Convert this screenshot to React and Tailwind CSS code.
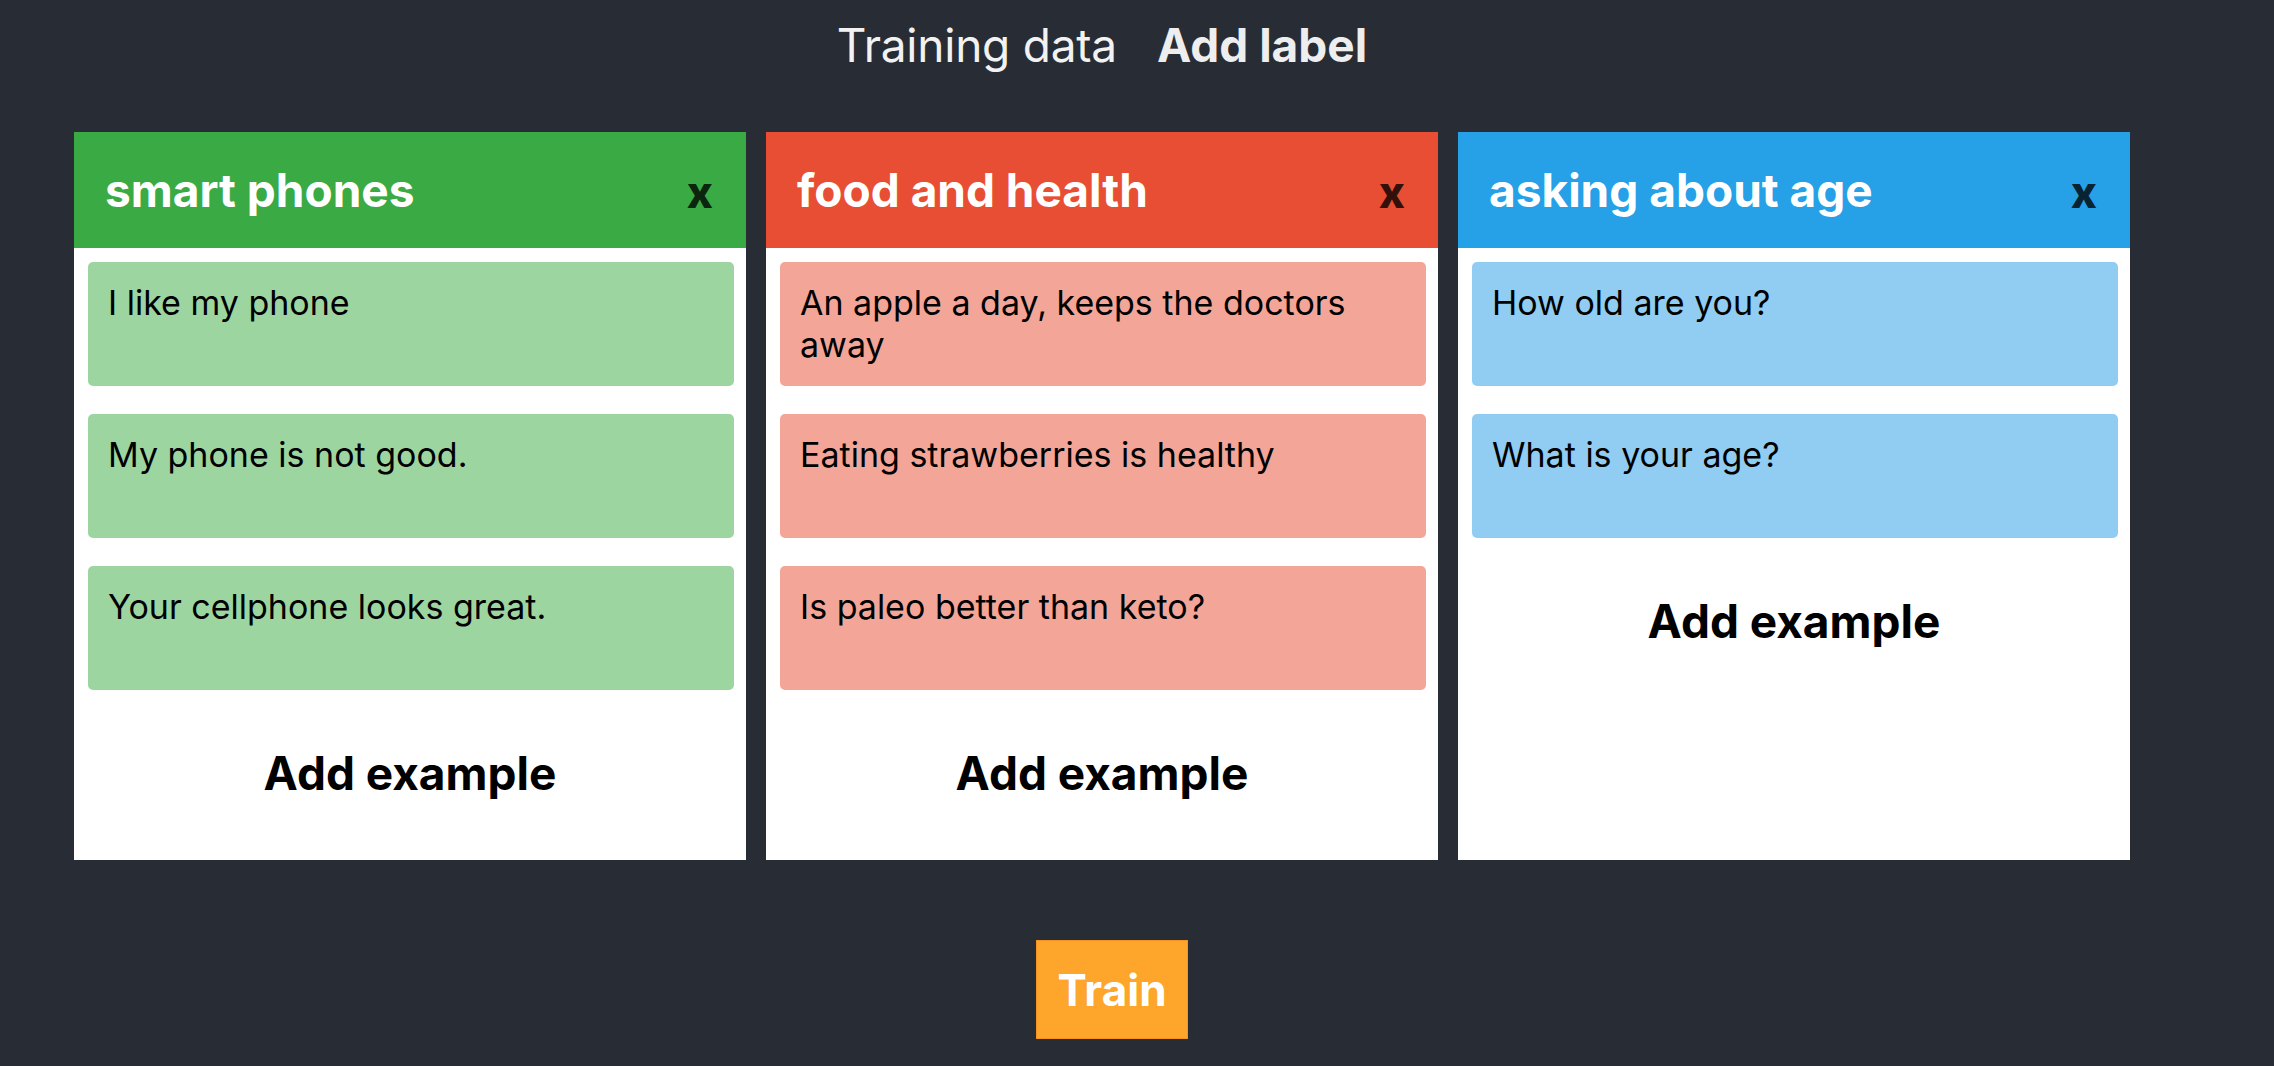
import { useState } from "react";

const LABELS = [
  {
    name: "smart phones",
    head: "bg-[#3aaa44]",
    item: "bg-[#9dd5a0]",
    examples: ["I like my phone", "My phone is not good.", "Your cellphone looks great."],
  },
  {
    name: "food and health",
    head: "bg-[#e84e33]",
    item: "bg-[#f3a598]",
    examples: [
      "An apple a day, keeps the doctors away",
      "Eating strawberries is healthy",
      "Is paleo better than keto?",
    ],
  },
  {
    name: "asking about age",
    head: "bg-[#26a0e6]",
    item: "bg-[#91cdf3]",
    examples: ["How old are you?", "What is your age?"],
  },
];

function LabelCard({ label, onRemove }) {
  return (
    <div className="w-[672px] bg-white flex flex-col">
      <div className={`h-[116px] flex items-center justify-between pl-[31px] pr-[33px] ${label.head}`}>
        <h2 className="text-[46px] font-bold text-white leading-none">
          {label.name}
        </h2>
        <button
          type="button"
          onClick={onRemove}
          className="text-[44px] font-extrabold text-black/80 leading-none pt-[4px]"
        >
          x
        </button>
      </div>

      <div className="flex flex-col gap-[28px] pt-[14px] pl-[14px] pr-[12px]">
        {label.examples.map((ex) => (
          <div
            key={ex}
            className={`h-[124px] rounded-[5px] px-5 pt-5 text-[34px] leading-[42px] text-black ${label.item}`}
          >
            {ex}
          </div>
        ))}
      </div>

      {/* add example */}
      <button
        type="button"
        className="pt-[56px] pb-[60px] text-[46px] leading-[54px] font-bold text-black"
      >
        Add example
      </button>
    </div>
  );
}

export default function App() {
  const [labels, setLabels] = useState(LABELS);

  return (
    <div className="min-h-screen bg-[#282c34] font-[Inter,sans-serif]">
      <div className="ml-[74px] w-[2056px] flex flex-col items-center">
        <div className="pt-[17px] pb-[59px] flex gap-[40px]">
          <span className="text-[46px] leading-[56px] text-[#f2f2f2] tracking-[-0.005em]">
            Training data
          </span>
          <button
            type="button"
            className="text-[46px] leading-[56px] font-bold text-[#eeeeee]"
          >
            Add label
          </button>
        </div>

        <div className="flex gap-5 items-stretch w-full">
          {labels.map((l) => (
            <LabelCard
              key={l.name}
              label={l}
              onRemove={() => setLabels(labels.filter((x) => x.name !== l.name))}
            />
          ))}
        </div>

        <button
          type="button"
          className="mt-[80px] ml-[20px] w-[152px] h-[99px] bg-[#fea62c] border border-[#f7931e] text-white text-[44px] font-bold"
        >
          Train
        </button>
      </div>
    </div>
  );
}
